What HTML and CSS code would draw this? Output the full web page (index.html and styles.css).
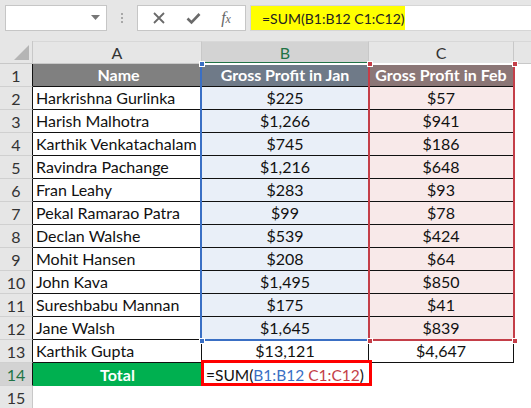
FILE: index.html
```html
<!DOCTYPE html>
<html>
<head>
<meta charset="utf-8">
<link rel="stylesheet" href="styles.css">
</head>
<body>
<div class="toolbar">
  <div class="namebox">
    <svg class="dd" width="9" height="5" viewBox="0 0 9 5"><path d="M0 0H9L4.5 5Z" fill="#777"/></svg>
  </div>
  <div class="grip"><i></i><i></i><i></i></div>
  <div class="fbtns">
    <svg width="14" height="14" viewBox="0 0 14 14"><path d="M2 2L12 12M12 2L2 12" stroke="#6a6a6a" stroke-width="1.8"/></svg>
    <svg width="15" height="13" viewBox="0 0 15 13"><path d="M1.5 6.5L5.5 10.5L13.5 2" stroke="#6a6a6a" stroke-width="2.6" fill="none"/></svg>
    <span class="fx">f<small>x</small></span>
  </div>
  <div class="fbar"><span class="hl">=SUM(B1:B12 C1:C12)</span></div>
</div>
<div class="sheet">
  <div class="corner"><svg width="15" height="15" viewBox="0 0 15 15"><path d="M15 0V15H0Z" fill="#b5b5b5"/></svg></div>
  <div class="colhdr">A</div>
  <div class="colhdr active">B</div>
  <div class="colhdr">C</div>
  <div class="colhdr rest"></div>

  <div class="rowhdr t">1</div>
  <div class="c a hd">Name</div>
  <div class="c b hd hb">Gross Profit in Jan</div>
  <div class="c cc hd hc">Gross Profit in Feb</div>
  <div class="e"></div>

  <div class="rowhdr t">2</div><div class="c a">Harkrishna Gurlinka</div><div class="c b sb">$225</div><div class="c cc sc">$57</div><div class="e"></div>
  <div class="rowhdr t">3</div><div class="c a">Harish Malhotra</div><div class="c b sb">$1,266</div><div class="c cc sc">$941</div><div class="e"></div>
  <div class="rowhdr t">4</div><div class="c a">Karthik Venkatachalam</div><div class="c b sb">$745</div><div class="c cc sc">$186</div><div class="e"></div>
  <div class="rowhdr t">5</div><div class="c a">Ravindra Pachange</div><div class="c b sb">$1,216</div><div class="c cc sc">$648</div><div class="e"></div>
  <div class="rowhdr t">6</div><div class="c a">Fran Leahy</div><div class="c b sb">$283</div><div class="c cc sc">$93</div><div class="e"></div>
  <div class="rowhdr t">7</div><div class="c a">Pekal Ramarao Patra</div><div class="c b sb">$99</div><div class="c cc sc">$78</div><div class="e"></div>
  <div class="rowhdr t">8</div><div class="c a">Declan Walshe</div><div class="c b sb">$539</div><div class="c cc sc">$424</div><div class="e"></div>
  <div class="rowhdr t">9</div><div class="c a">Mohit Hansen</div><div class="c b sb">$208</div><div class="c cc sc">$64</div><div class="e"></div>
  <div class="rowhdr t">10</div><div class="c a">John Kava</div><div class="c b sb">$1,495</div><div class="c cc sc">$850</div><div class="e"></div>
  <div class="rowhdr t">11</div><div class="c a">Sureshbabu Mannan</div><div class="c b sb">$175</div><div class="c cc sc">$41</div><div class="e"></div>
  <div class="rowhdr t">12</div><div class="c a">Jane Walsh</div><div class="c b sb">$1,645</div><div class="c cc sc">$839</div><div class="e"></div>
  <div class="rowhdr t">13</div><div class="c a">Karthik Gupta</div><div class="c b">$13,121</div><div class="c cc">$4,647</div><div class="e"></div>

  <div class="rowhdr t active">14</div>
  <div class="c total">Total</div>
  <div class="c b edit"><span>=SUM(<span class="rb">B1:B12</span> <span class="rc">C1:C12</span>)</span></div>
  <div class="e"></div>
  <div class="e"></div>

  <div class="rowhdr">15</div><div class="e"></div><div class="e"></div><div class="e"></div><div class="e"></div>

  <div class="range blue"></div>
  <div class="range red"></div>
  <div class="handle hbl" style="left:199px;top:20px"></div>
  <div class="handle hbl" style="left:199px;top:297px"></div>
  <div class="handle hrd" style="left:367px;top:20px"></div>
  <div class="handle hrd" style="left:512px;top:20px"></div>
  <div class="handle hrd" style="left:367px;top:297px"></div>
  <div class="handle hrd" style="left:512px;top:297px"></div>
  <div class="editbox"></div>
</div>
</body>
</html>
```
FILE: styles.css
```css
* { box-sizing: border-box; }
html, body { margin: 0; padding: 0; }
body {
  width: 531px;
  height: 408px;
  overflow: hidden;
  background: #fff;
  font-family: Lato, "Liberation Sans", sans-serif;
  color: #111;
}
.toolbar {
  height: 41px;
  background: #e6e6e6;
  display: flex;
  align-items: flex-start;
  padding-top: 5px;
  padding-left: 5px;
}
.namebox {
  width: 102px;
  height: 26px;
  background: #fff;
  border: 1px solid #c6c6c6;
  position: relative;
  display: flex;
  align-items: center;
  justify-content: flex-end;
  padding-right: 6px;
}
.dd { margin-top: -1px; }
.grip {
  width: 30px;
  height: 26px;
  display: flex;
  flex-direction: column;
  align-items: center;
  justify-content: center;
  gap: 2px;
}
.grip i { display: block; width: 2px; height: 2px; background: #a8a8a8; }
.fbtns {
  width: 109px;
  height: 26px;
  background: #fff;
  border: 1px solid #c6c6c6;
  display: flex;
  align-items: center;
  justify-content: space-around;
  padding: 0 4px;
}
.fx {
  font-family: "Liberation Serif", serif;
  font-style: italic;
  font-size: 16px;
  color: #666;
}
.fx small { font-size: 12px; }
.fbar {
  margin-left: 4px;
  flex: 1;
  height: 26px;
  background: #fff;
  border: 1px solid #d6d6d6;
  border-right: none;
}
.hl {
  display: inline-flex;
  align-items: center;
  height: 100%;
  width: 154px;
  background: #ffff00;
  padding-left: 11px;
  font-family: Lato, "Liberation Sans", sans-serif;
  font-size: 14px;
  color: #222;
}
.sheet {
  position: relative;
  display: grid;
  grid-template-columns: 33px 169px 167px 145px 1fr;
  grid-template-rows: 23px;
  grid-auto-rows: 23px;
}
.corner {
  background: #e6e6e6;
  border-right: 1px solid #c8c8c8;
  border-bottom: 1px solid #c8c8c8;
  display: flex;
  align-items: flex-end;
  justify-content: flex-end;
  padding: 0 3px 3px 0;
}
.colhdr {
  background: #e6e6e6;
  border-right: 1px solid #c8c8c8;
  border-bottom: 1px solid #c8c8c8;
  border-top: 1px solid #d8d8d8;
  display: flex;
  align-items: center;
  justify-content: center;
  font-size: 16px;
  color: #333;
}
.colhdr.active {
  background: #d3d3d3;
  color: #217346;
  border-bottom: 2px solid #217346;
}
.colhdr.rest { border-right: none; }
.rowhdr {
  background: #e6e6e6;
  border-right: 1px solid #c8c8c8;
  border-bottom: 1px solid #d0d0d0;
  display: flex;
  align-items: center;
  justify-content: center;
  font-size: 16px;
  color: #333;
}
.rowhdr.t { border-right-color: #111; }
.rowhdr.active {
  background: #d3d3d3;
  color: #217346;
}
.c {
  border-right: 1px solid #111;
  border-bottom: 1px solid #111;
  display: flex;
  align-items: flex-end;
  padding-bottom: 2px;
  font-size: 16px;
  white-space: pre;
  overflow: hidden;
}
.a { padding-left: 3px; }
.b, .cc { justify-content: center; }
.hd { font-weight: bold; color: #fff; background: #808080; justify-content: center; }
.hb { background: #6f7a88; }
.hc { background: #8b7676; }
.sb { background: #e9eff8; }
.sc { background: #f8e9e9; }
.total {
  background: #00b050;
  border-bottom: none;
  border-right: none;
  justify-content: center;
  color: #fff;
  font-weight: bold;
}
.edit {
  border: none;
  justify-content: flex-start;
  padding-left: 4px;
  font-size: 15.5px;
  color: #111;
}
.rb { color: #3a6fc4; }
.rc { color: #c43e48; }
.range { position: absolute; pointer-events: none; }
.range.blue {
  left: 200px;
  top: 22px;
  width: 170px;
  height: 278px;
  border: 2px solid #3a6fc4;
  border-top-color: #fff;
}
.range.red {
  left: 368px;
  top: 22px;
  width: 147px;
  height: 278px;
  border: 2px solid #c43e48;
  border-top-color: #fff;
}
.handle {
  position: absolute;
  width: 6px;
  height: 6px;
  border: 1px solid #fff;
}
.hbl { background: #3a6fc4; }
.hrd { background: #c43e48; }
.editbox {
  position: absolute;
  left: 201px;
  top: 319px;
  width: 171px;
  height: 26px;
  border: 3px solid #ff0000;
}
```
